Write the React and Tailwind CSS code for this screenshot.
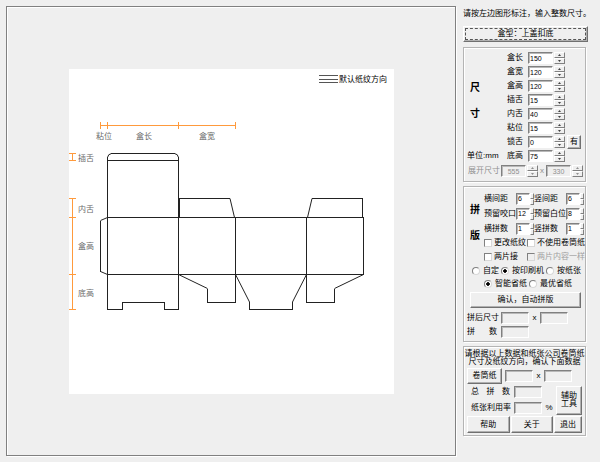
import React, { useState } from 'react';
import clsx from 'clsx';

const SUNKEN =
  'border border-t-[#808080] border-l-[#808080] border-r-white border-b-white ' +
  'shadow-[inset_1px_1px_0_#b8b8b8]';
const RAISED =
  'border border-t-white border-l-white border-r-[#707070] border-b-[#707070] ' +
  'shadow-[inset_-1px_-1px_0_#b0b0b0]';

const SIZE_FIELDS = [
  { id: 'length', label: '盒长', value: '150' },
  { id: 'width', label: '盒宽', value: '120' },
  { id: 'height', label: '盒高', value: '120' },
  { id: 'tuck', label: '插舌', value: '15' },
  { id: 'inner', label: '内舌', value: '40' },
  { id: 'glue', label: '粘位', value: '15' },
  { id: 'lock', label: '锁舌', value: '0' },
  { id: 'bottom', label: '底高', value: '75' },
];

const LAYOUT_FIELDS = [
  { id: 'gapX', label: '横间距', value: '6' },
  { id: 'gapY', label: '竖间距', value: '6' },
  { id: 'grip', label: '预留咬口', value: '12' },
  { id: 'margin', label: '预留白位', value: '8' },
  { id: 'countX', label: '横拼数', value: '1' },
  { id: 'countY', label: '竖拼数', value: '1' },
];

const Button = ({ className, children, ...props }) => (
  <button
    type="button"
    className={clsx(
      'flex items-center justify-center bg-[#efefef] whitespace-nowrap',
      RAISED,
      className
    )}
    {...props}
  >
    {children}
  </button>
);

const TextBox = ({ className, ...props }) => (
  <input
    type="text"
    className={clsx(
      'h-3 min-w-0 rounded-none px-px text-[7px] leading-none outline-none',
      SUNKEN,
      className
    )}
    {...props}
  />
);

const Spinner = ({ label, onStep, disabled }) => (
  <span className="flex h-3 w-[11px] shrink-0 flex-col">
    {[1, -1].map(step => (
      <button
        key={step}
        type="button"
        disabled={disabled}
        onClick={() => onStep?.(step)}
        aria-label={`${label}${step > 0 ? '增加' : '减少'}`}
        className="flex h-1.5 items-center justify-center border border-t-white border-l-white border-r-[#808080] border-b-[#808080] bg-[#efefef]"
      >
        <svg
          viewBox="0 0 3 2"
          className={clsx(
            'h-0.5 w-[3px]',
            disabled ? 'fill-[#909090]' : 'fill-[#404040]'
          )}
        >
          <path d={step > 0 ? 'M0 2 1.5 0 3 2Z' : 'M0 0 1.5 2 3 0Z'} />
        </svg>
      </button>
    ))}
  </span>
);

// Narrow spinner whose arrows are clipped by the next field
const SlimSpinner = ({ label, onStep }) => (
  <span className="flex h-3 w-1 shrink-0 flex-col">
    {[1, -1].map(step => (
      <button
        key={step}
        type="button"
        onClick={() => onStep(step)}
        aria-label={`${label}${step > 0 ? '增加' : '减少'}`}
        className="h-1.5 border border-t-white border-l-white border-r-[#808080] border-b-[#808080] bg-[#efefef]"
      />
    ))}
  </span>
);

const Choice = ({ type, label, className, ...props }) => (
  <label
    className={clsx(
      'flex items-center whitespace-nowrap',
      type === 'radio' ? 'gap-[3px]' : 'gap-0.5',
      props.disabled && 'text-[#a0a0a0]',
      className
    )}
  >
    <input
      type={type}
      className={clsx(
        'm-0 size-2 shrink-0 appearance-none border border-t-[#808080] border-l-[#808080] border-r-[#d8d8d8] border-b-[#d8d8d8]',
        type === 'radio'
          ? 'rounded-full bg-white checked:bg-[radial-gradient(circle,#000_1.5px,#fff_2px)]'
          : 'checked:bg-black',
        type === 'checkbox' && (props.disabled ? 'bg-[#efefef]' : 'bg-white')
      )}
      {...props}
    />
    {label}
  </label>
);

const Panel = ({ className, children }) => (
  <section
    className={clsx(
      'mr-0.5 border border-[#b4b4b4] shadow-[inset_1px_1px_0_#fff,1px_1px_0_#fff]',
      className
    )}
  >
    {children}
  </section>
);

const BoxDrawing = () => (
  <svg
    viewBox="0 0 325 325"
    className="h-auto w-full max-w-[325px] bg-white"
    role="img"
    aria-label="盒型展开图"
  >
    {/* Grain direction */}
    <path
      d="M250 6.5H269M250 10.5H269M250 13.5H269"
      stroke="#555"
      fill="none"
      shapeRendering="crispEdges"
    />
    <text x="270" y="13" fontSize="8" fill="#000">
      默认纸纹方向
    </text>

    {/* Dimension lines */}
    <path
      d="M31.5 56.5H166.5M31.5 53V60M38.5 53V60M109.5 53V60M166.5 53V60
         M3.5 84.5V91.5M0 84.5H7M0 91.5H7
         M3.5 129.5V240.5M0 129.5H7M0 148.5H7M0 205.5H7M0 240.5H7"
      stroke="#ff9a3c"
      fill="none"
      shapeRendering="crispEdges"
    />
    <g fontSize="8" fill="#6b6b6b">
      <text x="27" y="70">粘位</text>
      <text x="67" y="70">盒长</text>
      <text x="130" y="70">盒宽</text>
      <text x="9" y="92">插舌</text>
      <text x="9" y="143">内舌</text>
      <text x="9" y="180">盒高</text>
      <text x="9" y="227">底高</text>
    </g>

    {/* Straight cuts and creases */}
    <path
      d="M38.5 91.5H109.5M38.5 148.5H294.5V205.5H38.5
         M38.5 88V240.5H53.5V233.5H95.5V240.5H109.5V88
         M42 84.5H106
         M166.5 148.5V233.5H138.5V219.5
         M237.5 148.5V233.5H265.5V219.5
         M180.5 233V240.5H223.5V233
         M110.5 148.5V129.5H161M243 129.5H293.5V148.5
         M31.5 151.5V202.5"
      stroke="#222"
      fill="none"
      shapeRendering="crispEdges"
    />
    <path
      d="M38.5 88.5Q39 85 42.5 84.5M105.5 84.5Q109 85 109.5 88.5
         M38.5 148.5 31.5 151.5M31.5 202.5 38.5 205.5
         M161 129.5 165.5 148.5M243 129.5 238.5 148.5
         M109.5 205.5 138.5 219.5M294.5 205.5 265.5 219.5
         M166.5 205.5 180.5 233M237.5 205.5 223.5 233"
      stroke="#222"
      fill="none"
    />
  </svg>
);

const toValues = fields =>
  Object.fromEntries(fields.map(f => [f.id, f.value]));

export default function App() {
  const [values, setValues] = useState({
    ...toValues(SIZE_FIELDS),
    ...toValues(LAYOUT_FIELDS),
  });
  const [paper, setPaper] = useState('press');
  const [saving, setSaving] = useState('smart');

  const setValue = (id, value) => setValues(prev => ({ ...prev, [id]: value }));
  const stepValue = (id, step) =>
    setValue(id, String(Math.max(0, Number(values[id]) + step)));

  return (
    <div className="flex min-h-screen bg-[#efefef] font-['Liberation_Sans','Noto_Sans_CJK_SC',sans-serif] text-[8px] leading-[8px] text-black">
      <main className="my-1.5 ml-1.5 flex min-w-0 flex-1 items-start justify-center border border-[#808080] pt-[62px] shadow-[inset_1px_1px_0_#fff,1px_1px_0_#fff]">
        <BoxDrawing />
      </main>

      <aside className="mr-3 ml-[7px] w-[125px] shrink-0 pt-2.5">
        <p className="mb-2 whitespace-nowrap">
          请按左边图形标注，输入整数尺寸。
        </p>
        <Button className="mb-[5px] h-4 w-full outline-1 -outline-offset-3 outline-dashed outline-[#555]">
          盒型：上盖扣底
        </Button>

        {/* Box size */}
        <Panel className="mb-1 pt-[3px] pb-0.5">
          <div className="flex">
            <div className="flex w-[43px] shrink-0 flex-col justify-between pt-8 pb-[3px]">
              <h2 className="flex flex-col gap-4 pl-1.5 text-[10px] leading-[10px] font-bold">
                <span>尺</span>
                <span>寸</span>
              </h2>
              <span className="pl-[3px]">单位:mm</span>
            </div>
            <div>
              {SIZE_FIELDS.map(({ id, label }) => (
                <div key={id} className="flex h-3.5 items-center">
                  <label htmlFor={id} className="w-[21px]">
                    {label}
                  </label>
                  <TextBox
                    id={id}
                    className="mr-px w-[25px] bg-white"
                    value={values[id]}
                    onChange={e => setValue(id, e.target.value)}
                  />
                  <Spinner label={label} onStep={s => stepValue(id, s)} />
                  {id === 'lock' && (
                    <Button className="ml-0.5 h-3.5 w-3.5">有</Button>
                  )}
                </div>
              ))}
            </div>
          </div>
          <div className="flex h-4 items-center pl-1 text-[#909090]">
            <span className="w-[33px]">展开尺寸</span>
            <TextBox
              aria-label="展开宽"
              disabled
              value="555"
              className="mr-px w-[25px] text-center"
            />
            <Spinner label="展开宽" disabled />
            <span className="w-2 text-center">x</span>
            <TextBox
              aria-label="展开高"
              disabled
              value="330"
              className="mr-px w-[25px] text-center"
            />
            <Spinner label="展开高" disabled />
          </div>
        </Panel>

        {/* Imposition */}
        <Panel className="mb-1 pt-1 pb-0.5">
          <div className="flex">
            <h2 className="flex w-5 shrink-0 flex-col gap-4 pt-3.5 pl-1.5 text-[10px] leading-[10px] font-bold">
              <span>拼</span>
              <span>版</span>
            </h2>
            <div>
              <div className="grid w-[100px] grid-cols-2">
                {LAYOUT_FIELDS.map(({ id, label }) => (
                  <div key={id} className="flex h-[15px] items-center">
                    <label htmlFor={id} className="w-8 whitespace-nowrap">
                      {label}
                    </label>
                    <TextBox
                      id={id}
                      className="w-3.5 bg-white"
                      value={values[id]}
                      onChange={e => setValue(id, e.target.value)}
                    />
                    <SlimSpinner label={label} onStep={s => stepValue(id, s)} />
                  </div>
                ))}
              </div>
              <div className="flex h-3.5 items-center">
                <Choice type="checkbox" label="更改纸纹" className="w-[43px]" />
                <Choice type="checkbox" label="不使用卷筒纸" />
              </div>
              <div className="flex h-3.5 items-center">
                <Choice type="checkbox" label="两片接" className="w-[43px]" />
                <Choice type="checkbox" label="两片内容一样" disabled />
              </div>
            </div>
          </div>
          <div className="flex h-[13px] items-center gap-0.5 pl-2">
            <Choice
              type="radio"
              name="paper"
              label="自定"
              checked={paper === 'custom'}
              onChange={() => setPaper('custom')}
            />
            <Choice
              type="radio"
              name="paper"
              label="按印刷机"
              checked={paper === 'press'}
              onChange={() => setPaper('press')}
            />
            <Choice
              type="radio"
              name="paper"
              label="按纸张"
              checked={paper === 'sheet'}
              onChange={() => setPaper('sheet')}
            />
          </div>
          <div className="flex h-[13px] items-center gap-0.5 pl-5">
            <Choice
              type="radio"
              name="saving"
              label="智能省纸"
              checked={saving === 'smart'}
              onChange={() => setSaving('smart')}
            />
            <Choice
              type="radio"
              name="saving"
              label="最优省纸"
              checked={saving === 'best'}
              onChange={() => setSaving('best')}
            />
          </div>
          <Button className="mx-1.5 mt-0.5 mb-[3px] h-4 w-[111px]">
            确认，自动拼版
          </Button>
          <div className="flex h-3.5 items-center pl-[3px]">
            <label htmlFor="sheetW" className="w-[34px]">
              拼后尺寸
            </label>
            <TextBox id="sheetW" readOnly className="w-7" />
            <span className="w-[11px] text-center">x</span>
            <TextBox aria-label="拼后高" readOnly className="w-7" />
          </div>
          <div className="flex h-3.5 items-center pl-[3px]">
            <label htmlFor="count" className="flex w-[34px] justify-between pr-1">
              <span>拼</span>
              <span>数</span>
            </label>
            <TextBox id="count" readOnly className="w-7" />
          </div>
        </Panel>

        {/* Result */}
        <Panel className="px-[3px] pt-[3px] pb-0.5">
          <p className="-mx-1 mb-0.5 text-center whitespace-nowrap">
            请根据以上数据和纸张公司卷筒纸
            <br />
            尺寸及纸纹方向，确认下面数据
          </p>
          <div className="flex h-4 items-center">
            <Button className="mr-[3px] h-4 w-[35px]">卷筒纸</Button>
            <TextBox aria-label="卷筒纸宽" readOnly className="w-7" />
            <span className="w-[11px] text-center">x</span>
            <TextBox aria-label="卷筒纸高" readOnly className="w-7" />
          </div>
          <div className="flex items-center justify-between">
            <div>
              <div className="flex h-4 items-center pl-1">
                <label
                  htmlFor="total"
                  className="flex w-[43px] justify-between pr-1"
                >
                  <span>总</span>
                  <span>拼</span>
                  <span>数</span>
                </label>
                <TextBox id="total" readOnly className="w-7" />
              </div>
              <div className="flex h-4 items-center pl-1">
                <label htmlFor="usage" className="w-[43px]">
                  纸张利用率
                </label>
                <TextBox id="usage" readOnly className="w-7" />
                <span className="w-3.5 text-center">%</span>
              </div>
            </div>
            <Button className="h-[29px] w-7">
              辅助
              <br />
              工具
            </Button>
          </div>
          <div className="flex h-[17px] gap-px">
            <Button className="flex-1">帮助</Button>
            <Button className="flex-1">关于</Button>
            <Button className="w-7">退出</Button>
          </div>
        </Panel>
      </aside>
    </div>
  );
}
